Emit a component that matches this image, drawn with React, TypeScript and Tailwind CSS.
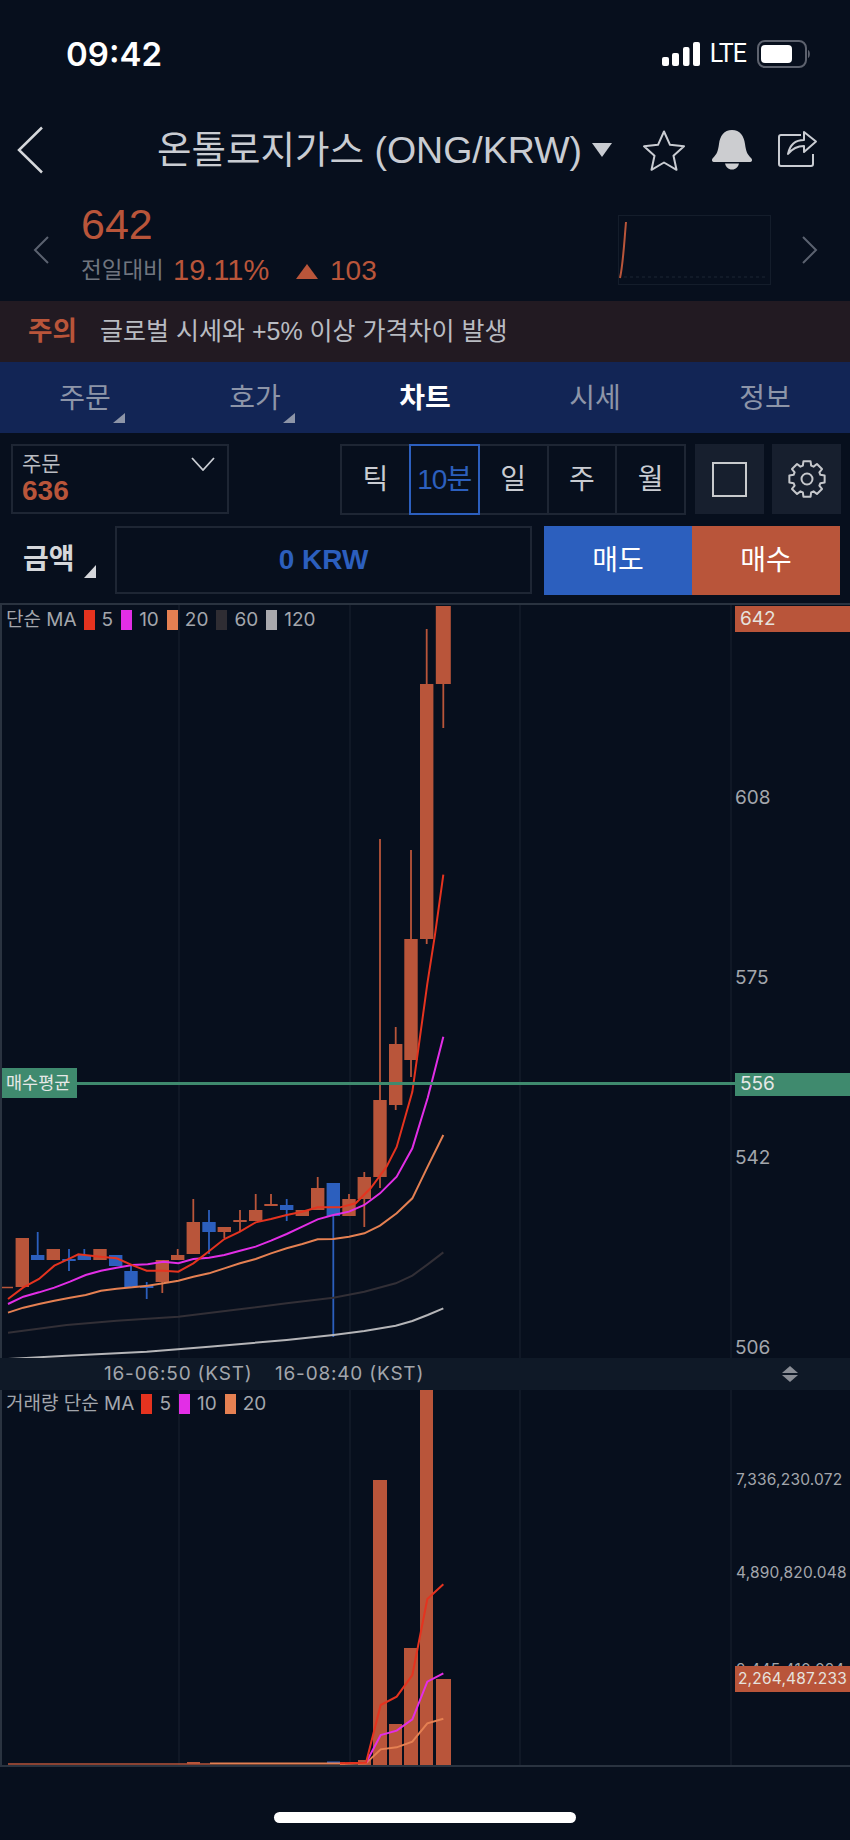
const KR = "font-['Liberation_Sans','Noto_Sans_CJK_KR',sans-serif]";
const CHART_FONT = "font-['Inter','Noto_Sans_CJK_KR',sans-serif]";

const RED = "#b9553a";
const BLUE = "#2c5fbe";

// x, wick top, wick bottom, body top, body bottom, up?  (page pixels)
const candles: [number, number, number, number, number, boolean][] = [
  [22.3, 1238, 1287, 1238, 1287, true],
  [37.7, 1232, 1260, 1255, 1260, false],
  [53.3, 1249, 1260, 1249, 1260, true],
  [69, 1249, 1271, 1259, 1261, false],
  [84.3, 1249, 1260, 1255, 1260, false],
  [100, 1249, 1260, 1249, 1260, true],
  [115.7, 1255, 1266, 1255, 1266, false],
  [131, 1266, 1287, 1271, 1287, false],
  [146.7, 1282, 1299, 1286, 1288, false],
  [162.3, 1260, 1293, 1260, 1282, true],
  [177.7, 1249, 1260, 1255, 1260, true],
  [193.3, 1199, 1254, 1222, 1254, true],
  [209, 1210, 1254, 1222, 1232, false],
  [224.3, 1227, 1238, 1227, 1232, true],
  [240, 1210, 1232, 1220, 1222, true],
  [255.7, 1194, 1221, 1210, 1221, true],
  [271, 1194, 1206, 1204, 1206, true],
  [286.7, 1199, 1221, 1205, 1210, false],
  [302.3, 1210, 1216, 1210, 1216, true],
  [317.7, 1177, 1210, 1188, 1210, true],
  [333.3, 1183, 1337, 1183, 1216, false],
  [349, 1194, 1216, 1199, 1216, true],
  [364.3, 1172, 1227, 1177, 1199, true],
  [380, 839, 1188, 1100, 1177, true],
  [395.7, 1027, 1110, 1044, 1105, true],
  [411, 850, 1077, 939, 1060, true],
  [426.7, 629, 944, 684, 939, true],
  [443.3, 606, 728, 606, 684, true],
];

// points read at 3x from the left part of the chart
const z3 = (pts: number[][]) => pts.map(([x, y]) => `${x / 3},${1130 + y / 3}`).join(" ");
const z4 = (pts: number[][]) => pts.map(([x, y]) => `${340 + x / 3},${600 + y / 2.45}`).join(" ");
const z5 = (pts: number[][]) => pts.map(([x, y]) => `${340 + x / 3},${1380 + y / 3}`).join(" ");

const ma5 =
  z3([[24,507],[70,472],[117,447],[163,407],[210,385],[235,373],[300,380],[350,385],[400,407],[440,422],[490,422],[535,425],[580,400],[625,365],[673,327],[720,305],[767,277],[813,267],[860,255],[907,245],[953,232],[1000,232]]) +
  " " +
  z4([[0,1488],[47,1478],[93,1440],[140,1388],[170,1340],[217,1205],[235,1100],[262,940],[285,820],[310,673]]);
const ma10 =
  z3([[24,522],[70,500],[117,487],[163,473],[210,455],[257,435],[303,422],[350,413],[397,405],[443,403],[490,395],[535,400],[580,387],[627,383],[673,375],[720,362],[767,350],[813,332],[860,312],[907,290],[953,268],[1000,255],[1047,245],[1093,225],[1140,190],[1190,140],[1237,55]]) +
  " " +
  z4([[263,1220],[285,1150],[310,1070]]);
const ma20 = z3([[24,548],[70,533],[117,522],[163,512],[210,503],[257,495],[303,482],[350,476],[397,472],[443,467],[490,460],[535,452],[580,440],[627,430],[673,415],[720,400],[767,387],[813,370],[860,355],[907,342],[953,328],[1000,327],[1047,320],[1093,310],[1140,287],[1190,250],[1237,205],[1283,110],[1330,15]]);
const ma60 = z3([[24,608],[200,585],[350,572],[535,560],[700,540],[860,520],[1000,503],[1093,485],[1187,460],[1237,437],[1283,403],[1330,367]]);
const ma120 = z3([[24,687],[200,677],[440,665],[627,650],[860,630],[1000,615],[1093,603],[1187,587],[1237,573],[1283,555],[1330,535]]);

const volBars = [
  [358, 371, 1760],
  [373, 387, 1480],
  [389, 402, 1724],
  [404, 418, 1648],
  [420, 433, 1389],
  [436, 451, 1679],
];
const volMa5 = z5([[0,1150],[78,1148],[122,975],[170,950],[217,885],[262,657],[310,613]]);
const volMa10 = z5([[78,1148],[122,1065],[170,1052],[217,1018],[262,905],[310,880]]);
const volMa20 = z5([[0,1152],[78,1150],[122,1108],[170,1102],[217,1085],[262,1030],[310,1016]]);

// 8 tooth cog for the settings button
const gearPoints = () => {
  const pts: string[] = [];
  for (let i = 0; i < 8; i++) {
    const a = (i * Math.PI) / 4 - Math.PI / 2;
    const at = (r: number, da: number) =>
      `${(20 + r * Math.cos(a + da)).toFixed(2)},${(20 + r * Math.sin(a + da)).toFixed(2)}`;
    pts.push(at(14, -0.3), at(18, -0.2), at(18, 0.2), at(14, 0.3));
  }
  return pts.join(" ");
};

const GridLines = ({ y1, y2 }: { y1: number; y2: number }) => (
  <>
    {[179, 350, 520, 731].map((x) => (
      <line key={x} x1={x} x2={x} y1={y1} y2={y2} stroke="#151c2a" strokeWidth="1.5" />
    ))}
  </>
);

const Legend = ({ label, items }: { label: string; items: [string, string][] }) => (
  <div className="flex items-center text-[19px] leading-[24px] text-[#a3a6ac] whitespace-nowrap">
    <span className="mr-[7px]">{label}</span>
    {items.map(([color, text]) => (
      <span key={text} className="flex items-center gap-[7px] mr-[8px]">
        <span className="w-[11px] h-[20px] inline-block" style={{ background: color }} />
        <span>{text}</span>
      </span>
    ))}
  </div>
);

const AxisLabel = ({ y, text }: { y: number; text: string }) => (
  <span
    className="absolute left-[733px] text-[19px] leading-[24px] text-[#a3a6ac]"
    style={{ top: y - 12 }}
  >
    {text}
  </span>
);

const App = () => {
  return (
    <div className={`w-[850px] h-[1840px] bg-[#070f1d] overflow-hidden ${KR}`}>
      {/* status bar */}
      <div className="h-[108px] flex items-start pt-[35px] pl-[66px] pr-[39px] justify-between">
        <span className="font-['Inter',sans-serif] text-[33px] leading-[38px] font-semibold text-white">09:42</span>
        <div className="flex items-center h-[38px]">
          <svg width="38" height="24" viewBox="0 0 38 24" fill="#fff">
            <rect x="0" y="15" width="7" height="9" rx="2" />
            <rect x="10" y="11" width="7" height="13" rx="2" />
            <rect x="21" y="5" width="6.500" height="19" rx="2" />
            <rect x="31" y="0" width="7" height="24" rx="2" />
          </svg>
          <span className="ml-[10px] font-['Roboto',sans-serif] text-[25px] leading-[30px] tracking-[-1px] text-white">LTE</span>
          <svg width="54" height="28" viewBox="0 0 54 28" className="ml-[11px]">
            <rect x="1" y="1" width="48" height="26" rx="7" fill="none" stroke="#5d626e" strokeWidth="2" />
            <rect x="4" y="5" width="31" height="18" rx="4" fill="#fff" />
            <path d="M51 10c2.500 1 2.500 7 0 8z" fill="#5d626e" />
          </svg>
        </div>
      </div>

      {/* title row */}
      <div className="h-[84px] flex items-center">
        <svg width="26" height="48" viewBox="0 0 26 48" fill="none" className="ml-[17px]">
          <path d="M25 1.500 2 24l23 22.500" stroke="#d5d7db" strokeWidth="2.500" />
        </svg>
        <span className="ml-[114px] text-[37.5px] leading-[44px] text-[#c9ccd2] whitespace-nowrap w-[435px]">
          온톨로지가스 (ONG/KRW)
        </span>
        <span className="w-0 h-0 border-x-[10px] border-x-transparent border-t-[14px] border-t-[#c9ccd2]" />
        <svg width="44" height="42" viewBox="0 0 44 42" fill="none" className="ml-[30px]">
          <path d="M22 2.500l6 13.300 14 1.500-10.500 9.500 3 14L22 33.500 9.500 40.800l3-14L2 17.300l14-1.500z" stroke="#c9ccd2" strokeWidth="2" strokeLinejoin="round" />
        </svg>
        <svg width="40" height="42" viewBox="0 0 40 42" fill="#cccdd0" className="ml-[26px]">
          <path d="M20 1C28 1 32 7 33 15 34 22 35 25 39 29 41 31 40 33 37 33H3C0 33-1 31 1 29 5 25 6 22 7 15 8 7 12 1 20 1z" />
          <path d="M13 34.500h14C26 38 24 40.500 20 40.500S14 38 13 34.500z" />
        </svg>
        <svg width="42" height="40" viewBox="0 0 42 40" fill="none" className="ml-[25px]" stroke="#c9ccd2" strokeWidth="2">
          <path d="M24 5H4a2 2 0 0 0-2 2v27a2 2 0 0 0 2 2h30a2 2 0 0 0 2-2V24" />
          <path d="M11 24C13 14 19 10 27 10V2L39 11.500 27 22V16C20 16 15 19 11 24z" strokeLinejoin="round" />
        </svg>
      </div>

      {/* price row */}
      <div className="h-[109px] flex items-start">
        <svg width="16" height="28" viewBox="0 0 16 28" fill="none" className="ml-[33px] mt-[44px] shrink-0">
          <path d="M15 1 2 14l13 13" stroke="#5b6270" strokeWidth="2" />
        </svg>
        <div className="ml-[32px] w-[537px] pt-[7px]">
          <div className="text-[43px] leading-[50px] text-[#b9553a]">642</div>
          <div className="flex items-center h-[30px] mt-[7px] whitespace-nowrap">
            <span className="text-[22.5px] text-[#70757f] w-[92px]">전일대비</span>
            <span className="text-[29px] text-[#b9553a] w-[123px]">19.11%</span>
            <span className="w-0 h-0 border-x-[11px] border-x-transparent border-b-[15px] border-b-[#b9553a]" />
            <span className="text-[28px] text-[#b9553a] ml-[12px]">103</span>
          </div>
        </div>
        <svg width="153" height="70" viewBox="0 0 153 70" fill="none" className="mt-[23px] shrink-0">
          <rect x="0.500" y="0.500" width="152" height="69" stroke="#141d2b" />
          <line x1="6" x2="147" y1="62" y2="62" stroke="#1d2735" strokeDasharray="3 3" />
          <path d="M2 63C5 50 6 30 8 7" stroke="#b9553a" strokeWidth="2" />
        </svg>
        <svg width="16" height="28" viewBox="0 0 16 28" fill="none" className="ml-[31px] mt-[44px] shrink-0">
          <path d="M1 1l13 13L1 27" stroke="#5b6270" strokeWidth="2" />
        </svg>
      </div>

      {/* warning */}
      <div className="h-[61px] bg-[#221a22] flex items-center pl-[28px] whitespace-nowrap">
        <span className="text-[26.5px] font-bold text-[#b9553a] w-[72px]">주의</span>
        <span className="text-[25px] text-[#b9bcc2]">글로벌 시세와 +5% 이상 가격차이 발생</span>
      </div>

      {/* tabs */}
      <div className="h-[71px] bg-[#122555] grid grid-cols-5">
        {["주문", "호가", "차트", "시세", "정보"].map((tab, i) => (
          <div key={tab} className="relative flex items-center justify-center pt-[2px]">
            <span className={`text-[28px] ${i === 2 ? "font-bold text-white" : "text-[#8d95a8]"}`}>{tab}</span>
            {i < 2 && (
              <span className="absolute left-[113px] top-[51px] w-0 h-0 border-l-[12px] border-l-transparent border-b-[10px] border-b-[#8d95a8]" />
            )}
          </div>
        ))}
      </div>

      {/* order selector + periods */}
      <div className="h-[93px] flex items-start pt-[11px]">
        <div className="ml-[11px] w-[218px] h-[70px] border-2 border-[#1e2634] flex justify-between pl-[9px] pr-[12px]">
          <div className="flex flex-col pt-[6px]">
            <span className="text-[21px] leading-[24px] text-[#b9bcc2]">주문</span>
            <span className="text-[28px] leading-[30px] font-bold text-[#b9553a]">636</span>
          </div>
          <svg width="24" height="14" viewBox="0 0 24 14" fill="none" className="mt-[11px]">
            <path d="M1 1l11 12L23 1" stroke="#c9ccd2" strokeWidth="1.800" />
          </svg>
        </div>
        <div className="ml-[111px] w-[346px] h-[71px] border-2 border-[#1e2634] flex">
          {["틱", "10분", "일", "주", "월"].map((p, i) => (
            <div
              key={p}
              className={
                i === 1
                  ? "w-[71px] -my-[2px] border-2 border-[#2c5fbe] text-[#2c5fbe] flex items-center justify-center text-[28px] tracking-[-1px]"
                  : `flex-1 flex items-center justify-center text-[28px] text-[#c9ccd2] ${i > 2 ? "border-l-2 border-[#1e2634]" : ""}`
              }
            >
              {p}
            </div>
          ))}
        </div>
        <div className="ml-[9px] w-[69px] h-[70px] bg-[#171f2e] flex items-center justify-center">
          <span className="w-[35px] h-[35px] border-[2.5px] border-[#c8cacd]" />
        </div>
        <div className="ml-[8px] w-[69px] h-[70px] bg-[#171f2e] flex items-center justify-center">
          <svg width="40" height="40" viewBox="0 0 40 40" fill="none" stroke="#c5c7cb" strokeWidth="2" strokeLinejoin="round">
            <polygon points={gearPoints()} />
            <circle cx="20" cy="20" r="5.500" />
          </svg>
        </div>
      </div>

      {/* amount row */}
      <div className="h-[77px] flex items-start">
        <div className="w-[115px] h-[68px] relative flex items-center pl-[23px]">
          <span className="text-[28px] font-bold text-[#d5d7db]">금액</span>
          <span className="absolute left-[84px] top-[39px] w-0 h-0 border-l-[12px] border-l-transparent border-b-[13px] border-b-[#d5d7db]" />
        </div>
        <div className="w-[417px] h-[68px] border-2 border-[#1e2634] flex items-center justify-center text-[28px] font-bold text-[#2c5fbe]">
          0 KRW
        </div>
        <div className="ml-[12px] w-[148px] h-[69px] bg-[#2c5fbe] flex items-center justify-center text-[28px] text-white">매도</div>
        <div className="w-[148px] h-[69px] bg-[#b9553a] flex items-center justify-center text-[28px] text-white">매수</div>
      </div>

      {/* main chart */}
      <div className={`relative h-[755px] border-t-2 border-l-2 border-[#2a3340] ${CHART_FONT}`}>
        <svg viewBox="2 605 848 753" className="block w-[848px] h-[753px]">
          <GridLines y1={605} y2={1358} />
          <line x1="2" x2="13" y1="1287.500" y2="1287.500" stroke={RED} strokeWidth="1.500" />
          {candles.map(([x, wt, wb, bt, bb, up]) => {
            const c = up ? RED : BLUE;
            const w = x > 440 ? 15 : 13.400;
            return (
              <g key={x}>
                <line x1={x} x2={x} y1={wt} y2={wb} stroke={c} strokeWidth="1.800" />
                <rect x={x - w / 2} y={bt} width={w} height={bb - bt} fill={c} />
              </g>
            );
          })}
          <polyline points={ma60} fill="none" stroke="#322f36" strokeWidth="2" />
          <polyline points={ma120} fill="none" stroke="#b5b5b8" strokeWidth="2" />
          <polyline points={ma20} fill="none" stroke="#e58052" strokeWidth="2" />
          <polyline points={ma10} fill="none" stroke="#e22ee6" strokeWidth="2" />
          <polyline points={ma5} fill="none" stroke="#e5331f" strokeWidth="2" />
          <rect x="2" y="1082" width="848" height="3" fill="#3f8a6e" />
        </svg>
        <div className="absolute left-[4px] top-[3px]">
          <Legend
            label="단순 MA"
            items={[
              ["#e5331f", "5"],
              ["#e22ee6", "10"],
              ["#e58052", "20"],
              ["#2f2d33", "60"],
              ["#a9a9ad", "120"],
            ]}
          />
        </div>
        <div className="absolute left-[733px] top-[1px] w-[115px] h-[26px] bg-[#b9553a] flex items-center pl-[5px] text-[19px] text-[#e6e2de]">642</div>
        <AxisLabel y={193} text="608" />
        <AxisLabel y={373} text="575" />
        <AxisLabel y={553} text="542" />
        <AxisLabel y={743} text="506" />
        <div className="absolute left-0 top-[463px] w-[75px] h-[30px] bg-[#3f8a6e] flex items-center pl-[4px] text-[17.5px] text-[#e6e8e6] whitespace-nowrap">매수평균</div>
        <div className="absolute left-[733px] top-[468px] w-[115px] h-[23px] bg-[#3f8a6e] flex items-center pl-[5px] text-[19px] text-[#e6e8e6]">556</div>
      </div>

      {/* time axis */}
      <div className={`relative h-[32px] bg-[#0f1927] text-[19px] leading-[32px] tracking-[0.8px] text-[#a3a6ac] ${CHART_FONT}`}>
        <span className="absolute left-[104px] top-0 whitespace-nowrap">16-06:50 (KST)</span>
        <span className="absolute left-[275px] top-0 whitespace-nowrap">16-08:40 (KST)</span>
        <span className="absolute left-[782px] top-[8px] w-0 h-0 border-x-[8px] border-x-transparent border-b-[7px] border-b-[#8a8e96]" />
        <span className="absolute left-[782px] top-[17px] w-0 h-0 border-x-[8px] border-x-transparent border-t-[7px] border-t-[#8a8e96]" />
      </div>

      {/* volume chart */}
      <div className={`relative h-[377px] border-b-2 border-l-2 border-[#2a3340] ${CHART_FONT}`}>
        <svg viewBox="2 1390 848 375" className="block w-[848px] h-[375px]">
          <GridLines y1={1390} y2={1765} />
          <rect x="187" y="1762" width="13" height="2" fill={RED} />
          <rect x="327" y="1761.500" width="13" height="2.500" fill={BLUE} />
          {volBars.map(([x1, x2, top]) => (
            <rect key={x1} x={x1} y={top} width={x2 - x1} height={1765 - top} fill={RED} />
          ))}
          <line x1="8" x2="210" y1="1764" y2="1764" stroke={RED} strokeWidth="1.500" />
          <line x1="210" x2="345" y1="1763.500" y2="1763.500" stroke="#e58052" strokeWidth="2" />
          <polyline points={volMa20} fill="none" stroke="#e58052" strokeWidth="2" />
          <polyline points={volMa10} fill="none" stroke="#e22ee6" strokeWidth="2" />
          <polyline points={volMa5} fill="none" stroke="#e5331f" strokeWidth="2" />
        </svg>
        <div className="absolute left-[4px] top-[2px]">
          <Legend
            label="거래량 단순 MA"
            items={[
              ["#e5331f", "5"],
              ["#e22ee6", "10"],
              ["#e58052", "20"],
            ]}
          />
        </div>
        <span className="absolute left-[734px] top-[79px] text-[15.500px] leading-[22px] tracking-[0.2px] text-[#a3a6ac]">7,336,230.072</span>
        <span className="absolute left-[734px] top-[172px] text-[15.500px] leading-[22px] tracking-[0.2px] text-[#a3a6ac]">4,890,820.048</span>
        <span className="absolute left-[734px] top-[269px] text-[15.500px] leading-[22px] tracking-[0.2px] text-[#a3a6ac]">2,445,410.024</span>
        <div className="absolute left-[733px] top-[276px] w-[115px] h-[26px] bg-[#b9553a] flex items-center justify-center text-[15.500px] tracking-[0.2px] text-[#e6e2de]">2,264,487.233</div>
      </div>

      {/* home indicator */}
      <div className="flex justify-center pt-[45px]">
        <div className="w-[302px] h-[11px] rounded-full bg-white" />
      </div>
    </div>
  );
};

export default App;
